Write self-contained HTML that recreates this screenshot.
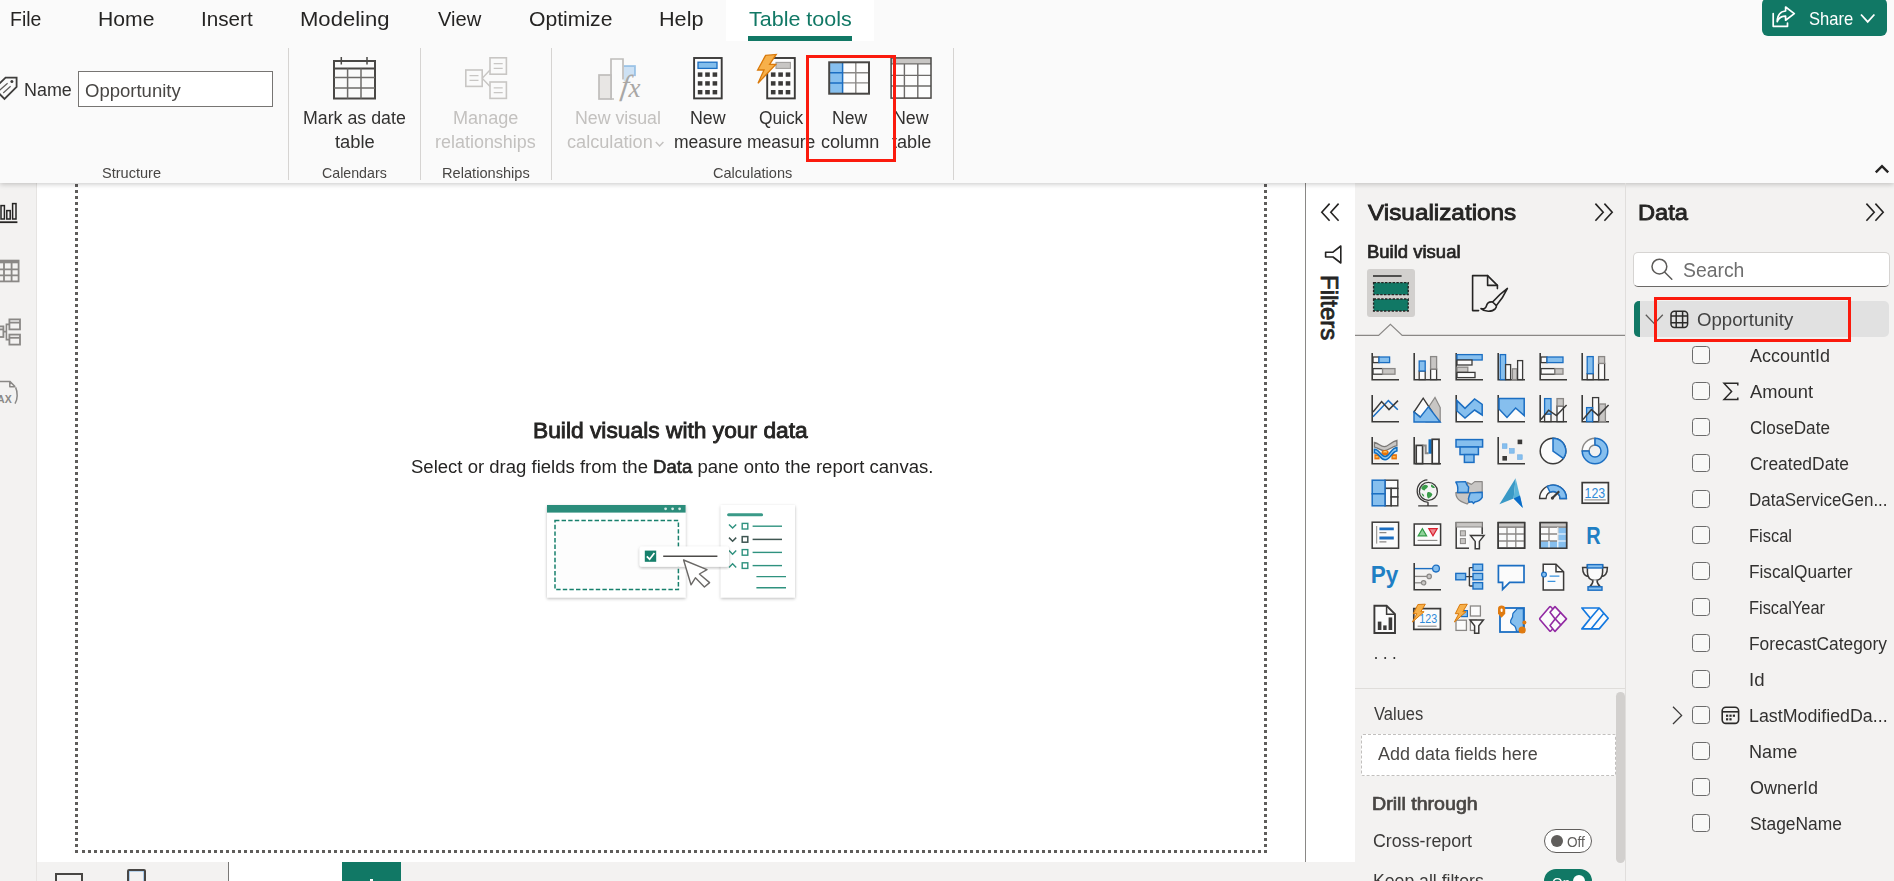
<!DOCTYPE html>
<html lang="en"><head><meta charset="utf-8"><title>Power BI Desktop - Table tools</title>
<style>
html,body{margin:0;padding:0;}
html{overflow:hidden;width:1894px;height:881px;}
body{width:1894px;height:881px;overflow:hidden;position:relative;background:#ffffff;font-family:"Liberation Sans",sans-serif;}
.a{position:absolute;}
.t{position:absolute;white-space:nowrap;line-height:1;transform-origin:0 50%;font-family:"Liberation Sans",sans-serif;}
svg{position:absolute;overflow:visible;}
#ribbon{left:0;top:0;width:1894px;height:183px;background:#fafafa;box-shadow:0 1.5px 5px rgba(0,0,0,.2);}
.sep{position:absolute;top:48px;width:1px;height:132px;background:#d6d4d2;}
#nav{left:0;top:183px;width:36px;height:698px;background:#f3f2f1;border-right:1px solid #e6e4e2;box-sizing:content-box;}
#vizpane{left:1355px;top:183px;width:270px;height:698px;background:#f3f2f1;}
#datapane{left:1626px;top:183px;width:268px;height:698px;background:#f3f2f1;}
#panesep{left:1625px;top:183px;width:1px;height:698px;background:#e0dedc;z-index:1;}
#bottombar{left:37px;top:862px;width:1318px;height:19px;background:#f3f2f1;}
.cb{position:absolute;left:1692px;width:16px;height:16px;border:1px solid #6b6b6b;border-radius:3.5px;background:#f8f8f7;}
.red{position:absolute;border:3px solid #fb1a0d;box-sizing:border-box;z-index:9;}

</style></head>
<body>
<!-- canvas -->
<div class="a" id="canvas" style="left:37px;top:183px;width:1268px;height:679px;background:#fff;"></div>
<div class="a" id="dots" style="left:75px;top:161px;width:1192px;height:692px;box-sizing:border-box;border:3px dotted #5f5d5b;"></div>
<div class="a" style="left:1305px;top:183px;width:1px;height:679px;background:#8a8886;"></div>
<div class="a" id="nav"></div>
<div class="a" id="vizpane"></div>
<div class="a" id="panesep"></div>
<div class="a" id="datapane"></div>
<div class="a" id="bottombar"></div>
<div class="a" id="ribbon"></div>
<!-- ===== ribbon ===== -->
<div class="a" style="left:726px;top:0;width:148px;height:41px;background:#ffffff;"></div>
<div class="a" style="left:748px;top:36px;width:104px;height:5px;background:#117865;"></div>
<!-- share button -->
<div class="a" style="left:1762px;top:-2px;width:125px;height:38px;background:#117865;border-radius:6px;"></div>
<svg style="left:1771px;top:5px" width="26" height="24" viewBox="0 0 26 24" fill="none" stroke="#fff" stroke-width="1.7" stroke-linejoin="round" stroke-linecap="round">
 <path d="M2.2 8.5 V21.3 H16.5 V18"/>
 <path d="M14.6 2 L23.3 8.6 L14.6 15.2 V11.2 C10.2 11.2 7.6 13.2 6.2 16.6 C6.4 10.4 9.6 6.4 14.6 6 Z"/>
</svg>
<svg style="left:1860px;top:13px" width="16" height="11" viewBox="0 0 16 11" fill="none" stroke="#fff" stroke-width="1.8"><path d="M1 1.5 L7.7 8.8 L14.4 1.5"/></svg>
<!-- collapse caret -->
<svg style="left:1874px;top:164px" width="16" height="10" viewBox="0 0 16 10" fill="none" stroke="#252423" stroke-width="2.4"><path d="M1.8 8.4 L8 2.2 L14.2 8.4"/></svg>
<!-- separators -->
<div class="sep" style="left:288px"></div>
<div class="sep" style="left:420px"></div>
<div class="sep" style="left:551px"></div>
<div class="sep" style="left:953px"></div>
<!-- tag icon -->
<svg style="left:0;top:70px" width="24" height="34" viewBox="0 70 24 34" fill="none" stroke="#3f3e3c" stroke-width="1.8" stroke-linejoin="miter">
 <path d="M5.6 77.6 H16.6 V86.8 L4.5 99 L-5.6 88.6 Z"/>
 <path d="M7.6 83.2 L-0.4 90.2 M10.6 86.2 L3.2 93" stroke="#605e5c" stroke-width="1.2"/>
 <circle cx="11.9" cy="81.4" r="1.5" fill="#3f3e3c" stroke="none"/>
</svg>
<!-- name input -->
<div class="a" style="left:78px;top:71px;width:195px;height:36px;box-sizing:border-box;border:1px solid #777573;background:#fff;"></div>
<!-- mark as date table icon -->
<svg style="left:332px;top:56px" width="45" height="44" viewBox="0 0 45 44" fill="none" stroke="#4a4846" stroke-width="1.6">
 <rect x="2" y="5" width="41" height="37.5" stroke-width="2"/>
 <path d="M9.3 1 V8.6 M35 1 V8.6" stroke-width="1.5"/>
 <path d="M2 12.6 H43" stroke-width="2"/>
 <path d="M2 21.6 H43 M2 32 H43 M15.6 12.6 V42.5 M29 12.6 V42.5" stroke="#6e6c6a" stroke-width="1.5"/>
</svg>
<!-- manage relationships icon (disabled) -->
<svg style="left:464px;top:56px" width="45" height="44" viewBox="0 0 45 44" fill="none" stroke="#c8c6c4" stroke-width="1.6">
 <rect x="1.8" y="14" width="16.4" height="16.4"/>
 <rect x="26" y="1.8" width="16.4" height="16.4"/>
 <rect x="26" y="26" width="16.4" height="16.4"/>
 <path d="M5.5 19.6 H14.5 M5.5 24.4 H14.5 M29.7 7.6 H38.7 M29.7 12.4 H38.7 M29.7 31.8 H38.7 M29.7 36.6 H38.7" stroke-width="1.3"/>
 <path d="M18.2 22.2 L26 14 M18.2 22.2 L26 30.4" stroke-width="1.4"/>
</svg>
<!-- new visual calculation icon (disabled) -->
<svg style="left:590px;top:50px" width="60" height="60" viewBox="590 50 60 60" fill="none">
 <rect x="623.8" y="65.2" width="11.9" height="16" fill="#cde1f4"/>
 <path d="M623.8 66.1 H634.9 V80" stroke="#9cc3e6" stroke-width="1.8"/>
 <ellipse cx="634.6" cy="85.6" rx="10.6" ry="9.6" fill="#fafafa"/>
 <rect x="611" y="59" width="12" height="40.6" fill="#fbfbfb"/>
 <path d="M614 99 H611 V59 H623 V79.6" stroke="#bfbdbb" stroke-width="1.7"/>
 <rect x="599" y="75" width="12" height="24" fill="#e8e6e4" stroke="#bfbdbb" stroke-width="1.7"/>
</svg>
<span class="a" style="left:620.6px;top:70.6px;font:italic 29px/1 'Liberation Serif',serif;color:#a9a7a5;transform:skewX(-8deg);">f</span>
<span class="a" style="left:628.4px;top:74.9px;font:italic 27px/1 'Liberation Serif',serif;color:#a9a7a5;">x</span>
<svg style="left:655px;top:141px" width="10" height="7" viewBox="0 0 10 7" fill="none" stroke="#c3c1bf" stroke-width="1.4"><path d="M0.8 0.9 L4.6 4.9 L8.4 0.9"/></svg>
<!-- new measure icon -->
<svg style="left:692px;top:56px" width="32" height="44" viewBox="0 0 32 44" fill="none">
 <rect x="2.1" y="2" width="27.6" height="40.4" stroke="#3b3a39" stroke-width="1.9" fill="#fdfdfd"/>
 <rect x="6" y="6.2" width="19" height="6.2" fill="#83beec" stroke="#1b6ec2" stroke-width="1.3"/>
 <g fill="#3b3a39">
  <rect x="5.8" y="16.4" width="4.6" height="4.4"/><rect x="13.2" y="16.4" width="4.6" height="4.4"/><rect x="20.6" y="16.4" width="4.6" height="4.4"/>
  <rect x="5.8" y="25.2" width="4.6" height="4.4"/><rect x="13.2" y="25.2" width="4.6" height="4.4"/><rect x="20.6" y="25.2" width="4.6" height="4.4"/>
  <rect x="5.8" y="34" width="4.6" height="4.4"/><rect x="13.2" y="34" width="4.6" height="4.4"/><rect x="20.6" y="34" width="4.6" height="4.4"/>
 </g>
</svg>
<!-- quick measure icon -->
<svg style="left:756px;top:53px" width="42" height="48" viewBox="0 0 42 48" fill="none">
 <rect x="11.2" y="5" width="27.6" height="40.4" stroke="#3b3a39" stroke-width="1.9" fill="#fdfdfd"/>
 <rect x="20" y="9.4" width="14.4" height="6" fill="#c8c6c4" stroke="#a19f9d" stroke-width="1.1"/>
 <g fill="#3b3a39">
  <rect x="14.9" y="19.4" width="4.6" height="4.4"/><rect x="22.3" y="19.4" width="4.6" height="4.4"/><rect x="29.7" y="19.4" width="4.6" height="4.4"/>
  <rect x="14.9" y="28.2" width="4.6" height="4.4"/><rect x="22.3" y="28.2" width="4.6" height="4.4"/><rect x="29.7" y="28.2" width="4.6" height="4.4"/>
  <rect x="14.9" y="37" width="4.6" height="4.4"/><rect x="22.3" y="37" width="4.6" height="4.4"/><rect x="29.7" y="37" width="4.6" height="4.4"/>
 </g>
 <path d="M9.6 2.4 L20.2 1.4 L13.6 11.4 L19.8 11.4 L2 30.2 L8 17 L1.6 17 Z" fill="#f7b04a" stroke="#d9790a" stroke-width="1.3" stroke-linejoin="miter"/>
</svg>
<!-- new column icon -->
<svg style="left:827px;top:60px" width="45" height="36" viewBox="0 0 45 36" fill="none">
 <rect x="2.2" y="2.3" width="39.8" height="31.4" fill="#fdfdfd"/>
 <rect x="2.2" y="2.3" width="13.4" height="31.4" fill="#86bfee"/>
 <path d="M15.6 12.7 H42 M15.6 22.9 H42 M28.8 2.3 V33.7" stroke="#8a8886" stroke-width="1.4"/>
 <path d="M2.2 12.7 H15.6 M2.2 22.9 H15.6 M15.6 2.3 V33.7" stroke="#1b6ec2" stroke-width="1.5"/>
 <rect x="2.2" y="2.3" width="39.8" height="31.4" stroke="#484644" stroke-width="2"/>
</svg>
<!-- new table icon -->
<svg style="left:889px;top:56px" width="45" height="44" viewBox="0 0 45 44" fill="none">
 <rect x="2.1" y="1.9" width="39.9" height="40.2" fill="#fdfdfd"/>
 <rect x="2.1" y="1.9" width="39.9" height="6" fill="#c8c6c4"/>
 <path d="M2.1 7.9 H42 M2.1 19.4 H42 M2.1 30 H42 M15.4 7.9 V42.1 M28.8 7.9 V42.1" stroke="#6e6c6a" stroke-width="1.4"/>
 <rect x="2.1" y="1.9" width="39.9" height="40.2" stroke="#4a4846" stroke-width="1.5"/>
</svg>
<!-- red highlight -->
<div class="red" style="left:806px;top:55px;width:90px;height:107px;"></div>

<!-- ===== left nav icons ===== -->
<svg style="left:-6px;top:202px" width="24" height="22" viewBox="0 0 24 22" fill="none" stroke="#252423" stroke-width="1.5">
 <rect x="1.2" y="6.8" width="3.4" height="10.2"/><rect x="7" y="3.6" width="3.4" height="13.4"/><rect x="12.8" y="8.6" width="3.4" height="8.4"/><rect x="18.6" y="1.6" width="3.4" height="15.4"/>
 <path d="M0 20.2 H23.4" stroke-width="1.8"/>
</svg>
<svg style="left:-8px;top:259px" width="28" height="24" viewBox="0 0 28 24" fill="none" stroke="#8a8886" stroke-width="1.8">
 <rect x="1" y="1.6" width="25.6" height="20.8"/>
 <path d="M1 3 H26.6" stroke-width="2.6"/>
 <path d="M1 10.4 H26.6 M1 16.4 H26.6 M12 4 V22.4 M19.6 4 V22.4"/>
</svg>
<svg style="left:-8px;top:317px" width="30" height="30" viewBox="0 0 30 30" fill="none" stroke="#8a8886" stroke-width="1.8">
 <rect x="-2" y="9.4" width="13.4" height="10.6"/><path d="M-2 12.4 H11.4"/>
 <rect x="17.4" y="2.4" width="10.6" height="10"/><path d="M17.4 5.6 H28"/>
 <rect x="17.4" y="17.6" width="10.6" height="10"/><path d="M17.4 20.8 H28"/>
 <path d="M11.4 14.6 H14.4 V7.4 H17.4 M14.4 14.6 V22.6 H17.4" stroke-width="1.6"/>
</svg>
<svg style="left:0;top:378px" width="22" height="28" viewBox="0 378 22 28" fill="none" stroke="#8a8886" stroke-width="1.5" stroke-linejoin="round">
 <path d="M-2 381.4 H9.8 L15.2 386.8 M9.8 381.4 V386.8 H15.2"/>
 <path d="M15.6 387.4 C17.8 392 17.8 399.4 15 403.6" stroke-width="1.5"/>
</svg>
<span class="a" style="left:-10.6px;top:394.2px;font:700 10.5px/1 'Liberation Sans',sans-serif;color:#8a8886;letter-spacing:.1px;">DAX</span>
<!-- ===== bottom bar ===== -->
<div class="a" style="left:228px;top:862px;width:1px;height:19px;background:#7a7876;"></div>
<div class="a" style="left:229px;top:862px;width:113px;height:19px;background:#ffffff;"></div>
<div class="a" style="left:342px;top:862px;width:59px;height:19px;background:#117865;"></div>
<div class="a" style="left:370px;top:879px;width:3px;height:4px;background:#fff;"></div>
<div class="a" style="left:55px;top:873px;width:24px;height:12px;border:2px solid #484644;"></div>
<div class="a" style="left:127px;top:869px;width:14.5px;height:14px;border:2px solid #484644;border-radius:2px;box-shadow:inset 0 0 0 .6px #7fb4e6;"></div>
<!-- ===== canvas illustration ===== -->
<svg style="left:536px;top:496px" width="272" height="116" viewBox="536 496 272 116" fill="none">
 <defs>
  <filter id="sh" x="-10%" y="-10%" width="120%" height="125%"><feDropShadow dx="0" dy="1.2" stdDeviation="1.6" flood-color="#000" flood-opacity=".28"/></filter>
 </defs>
 <!-- left card -->
 <rect x="547" y="505" width="138.6" height="92.5" fill="#fff" filter="url(#sh)"/>
 <rect x="547" y="505" width="138.6" height="7.6" fill="#2b8d7b"/>
 <circle cx="665.6" cy="508.8" r="1.4" fill="#d9ece8"/><circle cx="672.6" cy="508.8" r="1.4" fill="#d9ece8"/><circle cx="679.6" cy="508.8" r="1.4" fill="#d9ece8"/>
 <rect x="555" y="520.6" width="123.4" height="69" stroke="#17806c" stroke-width="1.5" stroke-dasharray="4.4 2.2" fill="#fdfdfd"/>
 <!-- right card -->
 <rect x="720.8" y="505" width="74.2" height="92.5" fill="#fff" filter="url(#sh)"/>
 <path d="M728.6 514.8 H761.6" stroke="#3a9a88" stroke-width="3" stroke-linecap="round"/>
 <g stroke="#2f927f" stroke-width="1.4">
  <path d="M729 524.4 L732.6 528 L736.2 524.4"/><rect x="742.2" y="523.4" width="5.6" height="5.6"/><path d="M752.6 526.2 H782"/>
  <path d="M729 550.6 L732.6 554.2 L736.2 550.6"/><rect x="742.2" y="549.6" width="5.6" height="5.6"/><path d="M752.6 552.4 H782"/>
  <path d="M729 567.4 L732.6 563.8 L736.2 567.4"/><rect x="742.2" y="562.8" width="5.6" height="5.6"/><path d="M752.6 565.6 H782"/>
  <path d="M756.4 576.6 H786 M756.4 587.8 H786"/>
 </g>
 <g stroke="#3f5652" stroke-width="1.5">
  <path d="M729 537.6 L732.6 541.2 L736.2 537.6"/><rect x="742.2" y="536.6" width="5.6" height="5.6"/><path d="M752.6 539.4 H782"/>
 </g>
 <!-- floating chip -->
 <rect x="639.6" y="546.4" width="89.4" height="20.4" rx="2.4" fill="#fff" filter="url(#sh)"/>
 <rect x="644.8" y="550.6" width="11.4" height="11.2" fill="#17806c"/>
 <path d="M646.8 556.4 L649.6 559.2 L654.4 553" stroke="#fff" stroke-width="1.7"/>
 <path d="M663.2 556.2 H717.4" stroke="#4d4b49" stroke-width="1.5"/>
 <!-- cursor -->
 <path d="M683.6 560 L707 569.6 L699.4 574 L709.6 582.6 L704.4 587 L695.4 577.8 L691 584.8 Z" fill="#fff" stroke="#6b6967" stroke-width="1.4" stroke-linejoin="round"/>
</svg>

<!-- ===== filters collapsed pane ===== -->
<svg style="left:1320px;top:202px" width="20" height="20" viewBox="0 0 20 20" fill="none" stroke="#252423" stroke-width="1.6"><path d="M9.6 1.6 L1.8 10.2 L9.6 18.8 M18.6 1.6 L10.8 10.2 L18.6 18.8"/></svg>
<svg style="left:1323px;top:243px" width="20" height="22" viewBox="0 0 20 22" fill="none" stroke="#252423" stroke-width="1.6" stroke-linejoin="round"><path d="M17.8 3 V20 L10 14 H2.6 V9.2 H10 Z"/></svg>
<span class="a" style="left:1341.2px;top:274.8px;transform-origin:0 0;transform:rotate(90deg);white-space:nowrap;font:400 24px/1 'Liberation Sans',sans-serif;color:#252423;-webkit-text-stroke:.8px #252423;">Filters</span>
<!-- ===== visualizations pane ===== -->
<svg style="left:1594px;top:202px" width="20" height="20" viewBox="0 0 20 20" fill="none" stroke="#252423" stroke-width="1.6"><path d="M1.4 1.6 L9.2 10.2 L1.4 18.8 M10.4 1.6 L18.2 10.2 L10.4 18.8"/></svg>
<div class="a" style="left:1367px;top:269px;width:48px;height:48px;background:#d2d0ce;border-radius:3px;"></div>
<svg style="left:1367px;top:269px" width="48" height="48" viewBox="0 0 48 48" fill="none">
 <path d="M6 7 H34.6" stroke="#252423" stroke-width="1.5"/>
 <rect x="6.6" y="13.6" width="34.6" height="12" fill="#117865" stroke="#252423" stroke-width="1.4" stroke-dasharray="2.4 1.4"/>
 <rect x="6.6" y="30" width="34.6" height="12" fill="#117865" stroke="#252423" stroke-width="1.4" stroke-dasharray="2.4 1.4"/>
</svg>
<svg style="left:1470px;top:273px" width="40" height="40" viewBox="0 0 40 40" fill="none" stroke="#252423" stroke-width="1.6" stroke-linejoin="round" stroke-linecap="round">
 <path d="M8.6 37.6 H2.6 V2.6 H17.6 L27.4 12.4 V15.6"/>
 <path d="M17.6 2.6 V12.4 H27.4"/>
 <path d="M37.4 15.4 C32 19.4 26.6 24.4 22.6 29 L26.4 32.6 C30.6 27.6 34.6 21.6 37.4 15.4 Z"/>
 <path d="M22.6 29 C19.4 28.6 17 30.4 16.4 33 C15.8 35.4 13.6 36.4 11 35.6 C14.6 39 22 39.4 25.4 35.6 C26.4 34.4 26.6 33.6 26.4 32.6"/>
</svg>
<!-- tab separator with caret -->
<svg style="left:1355px;top:322px" width="271" height="16" viewBox="0 0 271 16" fill="none"><path d="M0 13.4 H23.6 L35.4 2.4 L47.2 13.4 H271" stroke="#8a8886" stroke-width="1.2"/></svg>
<svg style="left:1371px;top:353px" width="28" height="28" viewBox="0 0 28 28" fill="none"><path d="M1.2 0 V26.8 H28" stroke="#3b3a39" stroke-width="1.6" fill="none"/><rect x="2" y="4" width="6" height="5.6" fill="#fbfbfb" stroke="#3b3a39" stroke-width="1.3"/><rect x="8" y="4" width="10.6" height="5.6" fill="#86bfee" stroke="#1b6ec2" stroke-width="1.3"/><rect x="2" y="15.6" width="9.6" height="5.6" fill="#fbfbfb" stroke="#3b3a39" stroke-width="1.3"/><rect x="11.6" y="15.6" width="12.4" height="5.6" fill="#c8c6c4" stroke="#8a8886" stroke-width="1.3"/></svg>
<svg style="left:1413px;top:353px" width="28" height="28" viewBox="0 0 28 28" fill="none"><path d="M1.2 0 V26.8 H28" stroke="#3b3a39" stroke-width="1.6" fill="none"/><rect x="6.2" y="18" width="6" height="8.6" fill="#fbfbfb" stroke="#3b3a39" stroke-width="1.3"/><rect x="6.2" y="8" width="6" height="10" fill="#86bfee" stroke="#1b6ec2" stroke-width="1.3"/><rect x="17.6" y="16" width="6" height="10.6" fill="#fbfbfb" stroke="#3b3a39" stroke-width="1.3"/><rect x="17.6" y="3.6" width="6" height="12.4" fill="#c8c6c4" stroke="#8a8886" stroke-width="1.3"/></svg>
<svg style="left:1455px;top:353px" width="28" height="28" viewBox="0 0 28 28" fill="none"><path d="M1.2 0 V26.8 H28" stroke="#3b3a39" stroke-width="1.6" fill="none"/><rect x="2" y="1.6" width="25.2" height="5.4" fill="#86bfee" stroke="#1b6ec2" stroke-width="1.3"/><rect x="2" y="7" width="15" height="5" fill="#fbfbfb" stroke="#3b3a39" stroke-width="1.3"/><rect x="2" y="14.2" width="10.8" height="5" fill="#c8c6c4" stroke="#8a8886" stroke-width="1.3"/><rect x="2" y="19.4" width="18" height="5.2" fill="#fbfbfb" stroke="#3b3a39" stroke-width="1.3"/></svg>
<svg style="left:1497px;top:353px" width="28" height="28" viewBox="0 0 28 28" fill="none"><path d="M1.2 0 V26.8 H28" stroke="#3b3a39" stroke-width="1.6" fill="none"/><rect x="3.2" y="1.6" width="5.4" height="25" fill="#86bfee" stroke="#1b6ec2" stroke-width="1.3"/><rect x="8.6" y="11.6" width="5" height="15" fill="#fbfbfb" stroke="#3b3a39" stroke-width="1.3"/><rect x="15.4" y="15.8" width="4.6" height="10.8" fill="#c8c6c4" stroke="#8a8886" stroke-width="1.3"/><rect x="20.6" y="7.6" width="5" height="19" fill="#fbfbfb" stroke="#3b3a39" stroke-width="1.3"/></svg>
<svg style="left:1539px;top:353px" width="28" height="28" viewBox="0 0 28 28" fill="none"><path d="M1.2 0 V26.8 H28" stroke="#3b3a39" stroke-width="1.6" fill="none"/><rect x="2" y="4" width="6" height="5.6" fill="#fbfbfb" stroke="#3b3a39" stroke-width="1.3"/><rect x="8" y="4" width="16" height="5.6" fill="#86bfee" stroke="#1b6ec2" stroke-width="1.3"/><rect x="2" y="15.6" width="14" height="5.6" fill="#fbfbfb" stroke="#3b3a39" stroke-width="1.3"/><rect x="16" y="15.6" width="8" height="5.6" fill="#c8c6c4" stroke="#8a8886" stroke-width="1.3"/></svg>
<svg style="left:1581px;top:353px" width="28" height="28" viewBox="0 0 28 28" fill="none"><path d="M1.2 0 V26.8 H28" stroke="#3b3a39" stroke-width="1.6" fill="none"/><rect x="6.2" y="20.6" width="6" height="6" fill="#fbfbfb" stroke="#3b3a39" stroke-width="1.3"/><rect x="6.2" y="3.6" width="6" height="17" fill="#86bfee" stroke="#1b6ec2" stroke-width="1.3"/><rect x="17.6" y="10.4" width="6" height="16.2" fill="#fbfbfb" stroke="#3b3a39" stroke-width="1.3"/><rect x="17.6" y="3.6" width="6" height="6.8" fill="#c8c6c4" stroke="#8a8886" stroke-width="1.3"/></svg>
<svg style="left:1371px;top:395px" width="28" height="28" viewBox="0 0 28 28" fill="none"><path d="M1.2 0 V26.8 H28" stroke="#3b3a39" stroke-width="1.6" fill="none"/><path d="M2 21.8 L17.4 5.6 L26.8 14.8" stroke="#1b6ec2" stroke-width="1.5" fill="none"/><path d="M2 17 L10.6 6.6 L18 14.6 L27 5.6" stroke="#3b3a39" stroke-width="1.5" fill="none"/></svg>
<svg style="left:1413px;top:395px" width="28" height="28" viewBox="0 0 28 28" fill="none"><path d="M13 16 L22 2.4 L27.2 12.6 V27 H13 Z" fill="#c8c6c4" stroke="#8a8886" stroke-width="1.2"/><path d="M1 17 L10.2 3.2 L19.4 17 L10 24 Z" fill="#fbfbfb" stroke="#3b3a39" stroke-width="1.4" stroke-linejoin="miter"/><path d="M1 17 L7.2 22.2 L15.4 11.8 L27.2 27 H1 Z" fill="#86bfee" stroke="#1b6ec2" stroke-width="1.4" stroke-linejoin="miter"/></svg>
<svg style="left:1455px;top:395px" width="28" height="28" viewBox="0 0 28 28" fill="none"><path d="M1.2 0 V26.8 H28" stroke="#3b3a39" stroke-width="1.6" fill="none"/><path d="M2 19 L10 25 L19.6 15 L27.2 20 V26 H2 Z" fill="#fbfbfb"/><path d="M2 5.6 L10 13.4 L19.6 4 L27.2 9.4 V20 L19.6 15 L10 23 L2 16 Z" fill="#86bfee" stroke="#1b6ec2" stroke-width="1.5" stroke-linejoin="miter"/></svg>
<svg style="left:1497px;top:395px" width="28" height="28" viewBox="0 0 28 28" fill="none"><path d="M1.2 0 V26.8 H28" stroke="#3b3a39" stroke-width="1.6" fill="none"/><path d="M2 14 L10 22.4 L18.6 13 L27.2 20.6 V26 H2 Z" fill="#fbfbfb"/><path d="M2 3.4 H27.2 V20.6 L18.6 13 L10 22.4 L2 14 Z" fill="#86bfee" stroke="#1b6ec2" stroke-width="1.5" stroke-linejoin="miter"/></svg>
<svg style="left:1539px;top:395px" width="28" height="28" viewBox="0 0 28 28" fill="none"><path d="M1.2 0 V26.8 H28" stroke="#3b3a39" stroke-width="1.6" fill="none"/><rect x="5.6" y="19" width="6.4" height="7.6" fill="#fbfbfb" stroke="#3b3a39" stroke-width="1.3"/><rect x="5.6" y="3.6" width="6.4" height="15.4" fill="#86bfee" stroke="#1b6ec2" stroke-width="1.3"/><rect x="18" y="11" width="6.4" height="15.6" fill="#fbfbfb" stroke="#3b3a39" stroke-width="1.3"/><rect x="18" y="3.6" width="6.4" height="7.4" fill="#c8c6c4" stroke="#8a8886" stroke-width="1.3"/><path d="M2 24.4 L9.6 15.2 L17.4 20.6 L27.6 10" stroke="#3b3a39" stroke-width="1.5" fill="none"/></svg>
<svg style="left:1581px;top:395px" width="28" height="28" viewBox="0 0 28 28" fill="none"><path d="M1.2 0 V26.8 H28" stroke="#3b3a39" stroke-width="1.6" fill="none"/><rect x="11.6" y="2.6" width="6" height="24" fill="#fbfbfb" stroke="#3b3a39" stroke-width="1.3"/><rect x="5.6" y="12.6" width="6" height="14" fill="#86bfee" stroke="#1b6ec2" stroke-width="1.3"/><rect x="18.4" y="9" width="6" height="17.6" fill="#c8c6c4" stroke="#8a8886" stroke-width="1.3"/><path d="M2 24.4 L10.4 14.6 L17.4 20.6 L27.6 10" stroke="#3b3a39" stroke-width="1.5" fill="none"/></svg>
<svg style="left:1371px;top:437px" width="28" height="28" viewBox="0 0 28 28" fill="none"><path d="M1.2 0 V26.8 H28" stroke="#3b3a39" stroke-width="1.6" fill="none"/><path d="M3.4 5.5 C8 6.5 9.5 9.6 13.2 9.6 C17.5 9.6 20 4.6 25.9 3.4 V8.6 C20 9.8 17.5 13.6 13.2 13.6 C9.5 13.6 8 11 3.4 10.2 Z" fill="#c8c6c4" stroke="#7a7876" stroke-width="1.3"/><rect x="3.4" y="17.2" width="5.2" height="5.2" fill="#e8730a"/><rect x="20.4" y="17.2" width="5.5" height="5.2" fill="#e8730a"/><ellipse cx="14.1" cy="15.8" rx="3.6" ry="2.8" fill="#e8730a"/><path d="M4.6 19.9 H7.4 M21.8 19.9 H24.6 M12.4 15.2 C13.4 14.5 14.8 14.5 15.8 15.2" stroke="#ffd36b" stroke-width="1.1" fill="none"/><path d="M3.4 12.3 C8.5 12.3 9.5 19.4 14.1 19.4 C19 19.4 19.5 11.2 25.9 10.5 V13.9 C20.5 14.5 19.6 22.8 14.1 22.8 C9 22.8 8.5 15.7 3.4 15.7 Z" fill="#8cc8f5" stroke="#0f6cbd" stroke-width="1.5"/></svg>
<svg style="left:1413px;top:437px" width="28" height="28" viewBox="0 0 28 28" fill="none"><path d="M1.2 0 V26.8 H28" stroke="#3b3a39" stroke-width="1.6" fill="none"/><rect x="3.2" y="8.4" width="6.4" height="18.2" fill="#fbfbfb" stroke="#3b3a39" stroke-width="1.7"/><path d="M9.6 8.6 H12.7 V16.2 H15.6" stroke="#8a8886" stroke-width="2" fill="none"/><rect x="15.5" y="2.3" width="3.3" height="14.4" fill="#0f6cbd"/><rect x="19.2" y="2.3" width="6.8" height="24.3" fill="#fbfbfb" stroke="#3b3a39" stroke-width="1.7"/></svg>
<svg style="left:1455px;top:437px" width="28" height="28" viewBox="0 0 28 28" fill="none"><rect x="1" y="2.6" width="26.6" height="7.4" fill="#86bfee" stroke="#1b6ec2" stroke-width="1.5"/><rect x="5" y="10" width="18.4" height="7.6" fill="#86bfee" stroke="#1b6ec2" stroke-width="1.5"/><rect x="9.4" y="17.6" width="9.6" height="7.8" fill="#86bfee" stroke="#1b6ec2" stroke-width="1.5"/></svg>
<svg style="left:1497px;top:437px" width="28" height="28" viewBox="0 0 28 28" fill="none"><path d="M1.2 0 V26.8 H28" stroke="#3b3a39" stroke-width="1.6" fill="none"/><rect x="20.6" y="2.6" width="4.6" height="4.6" fill="#3b3a39"/><rect x="5.4" y="19" width="4.6" height="4.6" fill="#3b3a39"/><rect x="5.4" y="6.8" width="4.6" height="4.6" fill="#86bfee" stroke="#6aaae4" stroke-width=".6"/><rect x="12.6" y="11.6" width="4.6" height="4.6" fill="#86bfee" stroke="#6aaae4" stroke-width=".6"/><rect x="20.6" y="17.8" width="4.6" height="4.6" fill="#86bfee" stroke="#6aaae4" stroke-width=".6"/></svg>
<svg style="left:1539px;top:437px" width="28" height="28" viewBox="0 0 28 28" fill="none"><circle cx="14" cy="14" r="12.8" fill="#fbfbfb" stroke="#3b3a39" stroke-width="1.5"/><path d="M14 1.2 A12.8 12.8 0 0 1 24.4 21.4 L14 14 Z" fill="#86bfee" stroke="#1b6ec2" stroke-width="1.5" stroke-linejoin="miter"/></svg>
<svg style="left:1581px;top:437px" width="28" height="28" viewBox="0 0 28 28" fill="none"><path d="M14 1.2 A12.8 12.8 0 0 0 1.2 14 H8 A6 6 0 0 1 14 8 Z" fill="#fbfbfb" stroke="#8a8886" stroke-width="1.4"/><path d="M14 1.2 A12.8 12.8 0 1 1 1.2 14 H8 A6 6 0 1 0 14 8 Z" fill="#86bfee" stroke="#1b6ec2" stroke-width="1.5" stroke-linejoin="miter"/></svg>
<svg style="left:1371px;top:479px" width="28" height="28" viewBox="0 0 28 28" fill="none"><rect x="14" y="1.2" width="12.8" height="8.2" fill="#fbfbfb" stroke="#3b3a39" stroke-width="1.4"/><rect x="14" y="9.4" width="6.2" height="17.4" fill="#fbfbfb" stroke="#3b3a39" stroke-width="1.4"/><rect x="20.2" y="9.4" width="6.6" height="8.6" fill="#fbfbfb" stroke="#3b3a39" stroke-width="1.4"/><rect x="20.2" y="18" width="6.6" height="8.8" fill="#fbfbfb" stroke="#3b3a39" stroke-width="1.4"/><rect x="1.2" y="1.2" width="12.8" height="13.6" fill="#86bfee" stroke="#1b6ec2" stroke-width="1.5"/><rect x="1.2" y="14.8" width="12.8" height="12" fill="#86bfee" stroke="#1b6ec2" stroke-width="1.5"/></svg>
<svg style="left:1413px;top:479px" width="28" height="28" viewBox="0 0 28 28" fill="none"><circle cx="15.4" cy="12.4" r="9" fill="#f4f4f4" stroke="#3b3a39" stroke-width="1.3"/><path d="M10.2 6.4 C12 5 14.6 5.6 15 7.6 C14.6 9.4 12.4 9.6 11.6 11.4 C10.4 11.4 8.6 10.6 8.2 9 C8.6 8 9.2 7 10.2 6.4 Z M14.4 13.4 C16 12.4 18.6 13.4 19.4 15.4 C18.8 17.4 17 18.6 15.2 19.4 C14 18 13.4 15.2 14.4 13.4 Z M18 5.6 C19.6 6 21.4 7.4 22 9 C20.6 9.4 19 8.6 18 7.4 Z M8.6 14.2 C10 14.6 11.4 16 11.2 17.8 C9.8 17.2 8.8 15.8 8.6 14.2 Z" fill="#3a9c4a"/><path d="M14.4 0.8 C7.8 1.2 3.8 6.6 4.2 12.8 C4.6 19 9.4 23 15.4 23.4" stroke="#3b3a39" stroke-width="1.3" fill="none"/><path d="M15 23.4 V26.8 M5.2 26.9 H24.6" stroke="#3b3a39" stroke-width="1.4"/></svg>
<svg style="left:1455px;top:479px" width="28" height="28" viewBox="0 0 28 28" fill="none"><path d="M13.6 8 C12.6 6.6 12 5 12 3.4 L16.4 5.4 L19.8 2.6 H27.2 V13.2 L15.2 13.8 L13.2 13.4 Z" fill="#c8c6c4" stroke="#8a8886" stroke-width="1.2" stroke-linejoin="round"/><path d="M0.8 13.6 L15 13.8 L13.4 19.6 L13.8 23.2 L12.2 25 L8.8 23.6 C5.6 22.6 2.4 20.4 1.2 16.8 Z" fill="#c8c6c4" stroke="#8a8886" stroke-width="1.2" stroke-linejoin="round"/><path d="M0.8 3 L10.6 2.6 C11.2 5 11.8 6.6 13.6 8 L13.2 13.5 L2.4 13.5 C3.2 10 3.4 7 0.8 3 Z" fill="#86bfee" stroke="#1b6ec2" stroke-width="1.4" stroke-linejoin="round"/><path d="M15.2 13.9 L27.2 13.2 V18.4 C25.6 21.4 22.6 22.6 19.8 23 L18.4 24.4 L17.2 22.8 L14 23.2 L13.5 19.6 Z" fill="#86bfee" stroke="#1b6ec2" stroke-width="1.4" stroke-linejoin="round"/></svg>
<svg style="left:1497px;top:479px" width="28" height="28" viewBox="0 0 28 28" fill="none"><path d="M18.6 -0.8 L2.4 25.2 L16.6 19.4 Z" fill="#3999c6"/><path d="M18.6 -0.8 L16.6 19.4 L25.8 29 Z" fill="#59b4d9"/><path d="M16.6 19.4 L23 16.6 L25.8 29 Z" fill="#0a6cc9"/></svg>
<svg style="left:1539px;top:479px" width="28" height="28" viewBox="0 0 28 28" fill="none"><g transform="translate(0,-1.5)"><path d="M0.6 21 A13.4 13.4 0 0 1 27.4 21 H21 A7 7 0 0 0 7 21 Z" fill="#fbfbfb" stroke="#3b3a39" stroke-width="1.4"/><path d="M8.2 8.9 A13.4 13.4 0 0 1 27.4 21 H21 A7 7 0 0 0 11 14.7 Z" fill="#86bfee" stroke="#1b6ec2" stroke-width="1.4" stroke-linejoin="miter"/><path d="M13.2 20.8 L20.2 13.8" stroke="#3b3a39" stroke-width="2.2"/><circle cx="13.4" cy="20.6" r="1.6" fill="#3b3a39"/></g></svg>
<svg style="left:1581px;top:479px" width="28" height="28" viewBox="0 0 28 28" fill="none"><rect x="1.2" y="3.6" width="26.2" height="20.6" fill="#fbfbfb" stroke="#3b3a39" stroke-width="1.7"/><text x="13.9" y="18.5" text-anchor="middle" font-family="Liberation Sans, sans-serif" font-size="14.4" fill="#2e8ad8" textLength="20.6" lengthAdjust="spacingAndGlyphs">123</text><path d="M3.4 20.9 H24.8" stroke="#8a8886" stroke-width="1.1"/></svg>
<svg style="left:1371px;top:521px" width="28" height="28" viewBox="0 0 28 28" fill="none"><rect x="1.2" y="1.2" width="26.4" height="26" fill="#fbfbfb" stroke="#3b3a39" stroke-width="1.5"/><path d="M8.4 7.8 H22.8 M8.4 17 H22.8" stroke="#1b6ec2" stroke-width="2.8"/><path d="M8.4 11.6 H15.4 M8.4 20.8 H15.4" stroke="#8a8886" stroke-width="1.3"/><path d="M5.7 5 V22.6" stroke="#8a8886" stroke-width="1"/></svg>
<svg style="left:1413px;top:521px" width="28" height="28" viewBox="0 0 28 28" fill="none"><rect x="1.2" y="3" width="26.4" height="21.2" fill="#fbfbfb" stroke="#3b3a39" stroke-width="1.5"/><path d="M5.2 14.8 L9.4 7.6 L13.6 14.8 Z" fill="#8fd19a" stroke="#2f9a44" stroke-width="1.2"/><path d="M15.8 7.6 L24.2 7.6 L20 14.8 Z" fill="#f08a92" stroke="#d8202f" stroke-width="1.2"/><path d="M4.6 19.4 H24.4" stroke="#8a8886" stroke-width="1.1"/></svg>
<svg style="left:1455px;top:521px" width="28" height="28" viewBox="0 0 28 28" fill="none"><rect x="1.2" y="1.6" width="26" height="25.6" fill="#fbfbfb" stroke="#3b3a39" stroke-width="1.5"/><rect x="1.2" y="1.6" width="26" height="4.4" fill="#c8c6c4" stroke="#8a8886" stroke-width="1"/><rect x="5.4" y="9.8" width="5" height="5" fill="#c8c6c4" stroke="#8a8886" stroke-width="1"/><rect x="5.4" y="17.6" width="5" height="5" fill="#c8c6c4" stroke="#8a8886" stroke-width="1"/><rect x="14" y="13" width="15" height="16" fill="#f3f2f1"/><path d="M15.6 14.6 h13.4 l-4.6 5.8 v7.4 h-4.2 v-7.4 z" fill="#fbfbfb" stroke="#3b3a39" stroke-width="1.5" stroke-linejoin="miter"/></svg>
<svg style="left:1497px;top:521px" width="28" height="28" viewBox="0 0 28 28" fill="none"><rect x="1.2" y="1.6" width="26.4" height="25.6" fill="#fbfbfb" stroke="#3b3a39" stroke-width="1.5"/><rect x="1.2" y="1.6" width="26.4" height="4.6" fill="#c8c6c4" stroke="#8a8886" stroke-width="1"/><path d="M1.2 6.2 H27.6 M1.2 13 H27.6 M1.2 20 H27.6 M10 6.2 V27.2 M18.8 6.2 V27.2" stroke="#8a8886" stroke-width="1.3"/><rect x="1.2" y="1.6" width="26.4" height="25.6" fill="none" stroke="#3b3a39" stroke-width="1.5"/></svg>
<svg style="left:1539px;top:521px" width="28" height="28" viewBox="0 0 28 28" fill="none"><rect x="1.2" y="1.6" width="26.4" height="25.6" fill="#fbfbfb" stroke="#3b3a39" stroke-width="1.5"/><rect x="18.8" y="6.2" width="8.8" height="21" fill="#86bfee"/><rect x="1.2" y="20" width="26.4" height="7.2" fill="#86bfee"/><rect x="1.2" y="1.6" width="26.4" height="4.6" fill="#c8c6c4" stroke="#8a8886" stroke-width="1"/><path d="M1.2 6.2 H27.6 M1.2 13 H18.8 M1.2 20 H18.8 M10 6.2 V20 M18.8 6.2 V20" stroke="#8a8886" stroke-width="1.3"/><path d="M18.8 13 H27.6 M18.8 20 H27.6 M10 20 V27.2 M18.8 20 V27.2 M18.8 6.2 V20" stroke="#fff" stroke-width="1.2"/><rect x="1.2" y="1.6" width="26.4" height="25.6" fill="none" stroke="#3b3a39" stroke-width="1.5"/></svg>
<svg style="left:1581px;top:521px" width="28" height="28" viewBox="0 0 28 28" fill="none"><text x="12.4" y="22.6" text-anchor="middle" font-family="Liberation Sans, sans-serif" font-weight="700" font-size="23.6" fill="#1f7fc4" textLength="14.4" lengthAdjust="spacingAndGlyphs">R</text></svg>
<svg style="left:1371px;top:563px" width="28" height="28" viewBox="0 0 28 28" fill="none"><text x="13.6" y="19.8" text-anchor="middle" font-family="Liberation Sans, sans-serif" font-weight="700" font-size="24" fill="#1f7fc4" textLength="27.6" lengthAdjust="spacingAndGlyphs">Py</text></svg>
<svg style="left:1413px;top:563px" width="28" height="28" viewBox="0 0 28 28" fill="none"><path d="M1.2 0 V26.8 H28" stroke="#3b3a39" stroke-width="1.6" fill="none"/><path d="M2 5.6 H20" stroke="#1b6ec2" stroke-width="1.4"/><circle cx="23" cy="5.6" r="3.4" fill="#86bfee" stroke="#1b6ec2" stroke-width="1.3"/><path d="M2 13.4 H14" stroke="#8a8886" stroke-width="1.3"/><circle cx="16.2" cy="13.4" r="2.2" fill="#c8c6c4" stroke="#8a8886" stroke-width="1.2"/><path d="M2 19.8 H8.6" stroke="#8a8886" stroke-width="1.3"/><circle cx="10.6" cy="19.8" r="2.2" fill="#c8c6c4" stroke="#8a8886" stroke-width="1.2"/></svg>
<svg style="left:1455px;top:563px" width="28" height="28" viewBox="0 0 28 28" fill="none"><path d="M10.4 13.6 H18 M14.4 4.6 V23 M14.4 4.6 H18 M14.4 23 H18" stroke="#3b3a39" stroke-width="1.4" fill="none"/><rect x="0.8" y="10.4" width="9.8" height="6.4" fill="#86bfee" stroke="#1b6ec2" stroke-width="1.4"/><rect x="18" y="1.2" width="9.6" height="6.4" fill="#86bfee" stroke="#1b6ec2" stroke-width="1.4"/><rect x="18" y="10.4" width="9.6" height="6.4" fill="#86bfee" stroke="#1b6ec2" stroke-width="1.4"/><rect x="18" y="19.6" width="9.6" height="6.4" fill="#86bfee" stroke="#1b6ec2" stroke-width="1.4"/></svg>
<svg style="left:1497px;top:563px" width="28" height="28" viewBox="0 0 28 28" fill="none"><path d="M1.4 2.6 H27 V19.4 H12.6 L5.6 26.4 V19.4 H1.4 Z" fill="#fbfbfb" stroke="#1b6ec2" stroke-width="1.7" stroke-linejoin="miter"/></svg>
<svg style="left:1539px;top:563px" width="28" height="28" viewBox="0 0 28 28" fill="none"><path d="M4.2 1.2 H17 L24.6 8.8 V27 H4.2 Z" fill="#fbfbfb" stroke="#3b3a39" stroke-width="1.5" stroke-linejoin="miter"/><path d="M17 1.2 V8.8 H24.6" fill="none" stroke="#3b3a39" stroke-width="1.5"/><circle cx="5" cy="11.6" r="2.4" fill="#86bfee" stroke="#1b6ec2" stroke-width="1.2"/><path d="M10.6 13.2 H20.4 M8.6 18.4 H16.4" stroke="#3a93de" stroke-width="1.2"/></svg>
<svg style="left:1581px;top:563px" width="28" height="28" viewBox="0 0 28 28" fill="none"><path d="M6.4 4.6 H1.6 C1.6 11 4.4 13.6 8.4 13.6 M21.6 4.6 H26.4 C26.4 11 23.6 13.6 19.6 13.6" fill="none" stroke="#3b3a39" stroke-width="1.5"/><path d="M6.4 2 H21.6 V9 C21.6 14.6 18.4 17.4 14 17.4 C9.6 17.4 6.4 14.6 6.4 9 Z" fill="#fbfbfb" stroke="#3b3a39" stroke-width="1.5"/><path d="M12 17.2 C12 20.4 10.6 22 8.8 23.6 H19.2 C17.4 22 16 20.4 16 17.2" fill="#fbfbfb" stroke="#3b3a39" stroke-width="1.5"/><rect x="6.4" y="1.6" width="15.2" height="3.4" fill="#86bfee" stroke="#1b6ec2" stroke-width="1.4"/><rect x="7" y="23.8" width="14" height="3.4" fill="#86bfee" stroke="#1b6ec2" stroke-width="1.4"/></svg>
<svg style="left:1371px;top:605px" width="28" height="28" viewBox="0 0 28 28" fill="none"><path d="M3.4 0.8 H15.6 L24 9.2 V28 H3.4 Z" fill="#fbfbfb" stroke="#3b3a39" stroke-width="1.9" stroke-linejoin="miter"/><path d="M15.6 0.8 V9.2 H24" fill="none" stroke="#3b3a39" stroke-width="1.5"/><rect x="6.8" y="16.6" width="3.6" height="8.4" fill="#3b3a39"/><rect x="12.2" y="20.4" width="3.4" height="4.6" fill="#3b3a39"/><rect x="17.6" y="12.4" width="3.6" height="12.6" fill="#3b3a39"/></svg>
<svg style="left:1413px;top:605px" width="28" height="28" viewBox="0 0 28 28" fill="none"><rect x="0.8" y="3.6" width="26.6" height="20.8" fill="#fbfbfb" stroke="#3b3a39" stroke-width="1.7"/><text x="15.2" y="18.4" text-anchor="middle" font-family="Liberation Sans, sans-serif" font-size="13.4" fill="#2e8ad8" textLength="17.8" lengthAdjust="spacingAndGlyphs">123</text><path d="M4.6 21.2 H23.6" stroke="#8a8886" stroke-width="1.1"/><path d="M4.9 -0.5 l7.4 -0.3 l-4.5 7.5 h3.3 l-11.7 10.3 l4.4 -8.3 h-3.5 z" fill="#f7b04a" stroke="#d9790a" stroke-width="1" stroke-linejoin="miter"/></svg>
<svg style="left:1455px;top:605px" width="28" height="28" viewBox="0 0 28 28" fill="none"><rect x="15.4" y="1" width="10" height="10" fill="#fbfbfb" stroke="#8a8886" stroke-width="1.3"/><rect x="1" y="15.2" width="10.4" height="10.2" fill="#fbfbfb" stroke="#8a8886" stroke-width="1.3"/><rect x="15.4" y="15.2" width="6" height="10.2" fill="#fbfbfb" stroke="#8a8886" stroke-width="1.3"/><rect x="6.4" y="5.6" width="6" height="6" fill="#86bfee" stroke="#1b6ec2" stroke-width="1.2"/><path d="M15 15 h13.4 l-4.6 5.8 v7.4 h-4.2 v-7.4 z" fill="#fbfbfb" stroke="#3b3a39" stroke-width="1.5" stroke-linejoin="miter"/><path d="M4.9 -0.5 l7.4 -0.3 l-4.5 7.5 h3.3 l-11.7 10.3 l4.4 -8.3 h-3.5 z" fill="#f7b04a" stroke="#d9790a" stroke-width="1" stroke-linejoin="miter"/></svg>
<svg style="left:1497px;top:605px" width="28" height="28" viewBox="0 0 28 28" fill="none"><rect x="3" y="3" width="24" height="24" fill="#fbfbfb" stroke="#1b6ec2" stroke-width="1.8"/><path d="M20 3.6 C19 6.6 14.6 7 15.6 10.6 C16.4 13.4 12.6 14 13.6 17.4 C14.4 20 18 19.6 18.6 22.6 L19.6 26.4 H26.4 V3.6 Z" fill="#86bfee" stroke="#1b6ec2" stroke-width="1.3"/><path d="M1 3.6 C1 1.4 2.6 0.4 4.6 0.4 C6.6 0.4 8.2 1.4 8.2 3.6 V8.8 L4.6 12.8 L1 8.8 Z" fill="#e07b10"/><rect x="3.6" y="3.4" width="2" height="3.6" rx="1" fill="#fff"/><circle cx="25.2" cy="25" r="3.6" fill="#e07b10"/><circle cx="27.4" cy="17.6" r="2" fill="#e07b10"/></svg>
<svg style="left:1539px;top:605px" width="28" height="28" viewBox="0 0 28 28" fill="none"><path d="M13.6 3.8 L11.7 1.8 Q11.2 1.3 10.7 1.8 L0.9 13.3 Q0.5 13.9 0.9 14.5 L10.7 26 Q11.2 26.5 11.7 26 L13.6 24" fill="#fbfbfb" stroke="#922aa3" stroke-width="1.6" stroke-linecap="round"/><path d="M16 1.6 L27.5 13.9 L16 26.4 L11 20.5 L16.2 13.9 L11 7.3 Z" fill="#fbfbfb" stroke="#922aa3" stroke-width="1.6" stroke-linejoin="round"/><path d="M16.2 13.9 L21.7 19.8 M21.5 7.7 L16.2 13.9" stroke="#922aa3" stroke-width="1.6" stroke-linecap="round"/></svg>
<svg style="left:1581px;top:605px" width="28" height="28" viewBox="0 0 28 28" fill="none"><path d="M0.9 3 H18.2 L27.2 13.3 L18.2 23.9 H0.9 L9.4 13.3 Z" fill="#fbfbfb" stroke="#1278e0" stroke-width="1.7" stroke-linejoin="round"/><path d="M18.2 3 L9.4 13.3 M22.6 8.4 L10 23.9" stroke="#1278e0" stroke-width="1.6" fill="none"/></svg>
<div class="a" style="left:1374.7px;top:656.7px;width:2.6px;height:2.6px;background:#252423;border-radius:1px;box-shadow:9.2px 0 #252423,18.3px 0 #252423;"></div>
<!-- wells -->
<div class="a" style="left:1355px;top:688px;width:270px;height:1px;background:#dfddda;"></div>
<div class="a" style="left:1616.3px;top:692px;width:8.7px;height:171px;background:#d2d0ce;border-radius:4.4px;"></div>
<div class="a" style="left:1361px;top:734px;width:255px;height:41.5px;box-sizing:border-box;background:#fff;border:1px dashed #c2c0be;border-radius:2px;"></div>
<!-- toggles -->
<div class="a" style="left:1544px;top:829px;width:48px;height:24px;box-sizing:border-box;background:#fff;border:1px solid #605e5c;border-radius:12px;"></div>
<div class="a" style="left:1551px;top:835px;width:12px;height:12px;border-radius:6px;background:#605e5c;"></div>
<div class="a" style="left:1544px;top:869px;width:48px;height:24px;background:#117865;border-radius:12px;"></div>
<div class="a" style="left:1573px;top:875px;width:12px;height:12px;border-radius:6px;background:#fff;"></div>

<!-- ===== data pane ===== -->
<svg style="left:1865px;top:202px" width="20" height="20" viewBox="0 0 20 20" fill="none" stroke="#252423" stroke-width="1.6"><path d="M1.4 1.6 L9.2 10.2 L1.4 18.8 M10.4 1.6 L18.2 10.2 L10.4 18.8"/></svg>
<div class="a" style="left:1632.5px;top:251.5px;width:257.5px;height:35.5px;box-sizing:border-box;background:#fff;border:1px solid #d6d4d2;border-bottom:1.3px solid #6b6967;border-radius:5px;"></div>
<svg style="left:1650px;top:257px" width="24" height="24" viewBox="0 0 24 24" fill="none" stroke="#5c5a58" stroke-width="1.5" stroke-linecap="round"><circle cx="9.4" cy="9.6" r="7.4"/><path d="M14.8 15.2 L21.8 22.2"/></svg>
<!-- selected table row -->
<div class="a" style="left:1634px;top:301px;width:255px;height:36px;background:#e1e1e1;border-radius:5px;"></div>
<div class="a" style="left:1634px;top:301px;width:6.4px;height:36px;background:#117865;border-radius:5px 0 0 5px;"></div>
<svg style="left:1645px;top:313.6px" width="19" height="11" viewBox="0 0 19 11" fill="none" stroke="#5c5a58" stroke-width="1.3"><path d="M0.8 0.8 L9.3 9.6 L17.8 0.8"/></svg>
<svg style="left:1670px;top:310px" width="19" height="19" viewBox="0 0 19 19" fill="none" stroke="#2b2a29" stroke-width="1.5"><rect x="1" y="1.2" width="16.6" height="16.2" rx="3.4"/><path d="M1 6 H17.6 M1 12.8 H17.6 M6.2 1.2 V17.4 M12.6 1.2 V17.4"/></svg>
<div class="red" style="left:1654px;top:297px;width:197px;height:45px;"></div>
<!-- sigma -->
<svg style="left:1722px;top:381.5px" width="18" height="19" viewBox="0 0 18 19" fill="none" stroke="#2b2a29" stroke-width="1.5" stroke-linejoin="miter"><path d="M15.8 3.4 V1.2 H2 L9.6 9.4 L2 17.6 H15.8 V15.4"/></svg>
<!-- calendar + chevron on LastModifiedDate -->
<svg style="left:1671.6px;top:706px" width="11" height="19" viewBox="0 0 11 19" fill="none" stroke="#3b3a39" stroke-width="1.3"><path d="M1 0.8 L9.6 9.4 L1 18"/></svg>
<svg style="left:1721.4px;top:706px" width="19" height="19" viewBox="0 0 19 19" fill="none" stroke="#2b2a29" stroke-width="1.6"><rect x="1.2" y="1.2" width="16.4" height="16.2" rx="3.6"/><path d="M1.2 5.8 H17.6"/><g fill="#2b2a29" stroke="none"><rect x="5" y="8.6" width="2.2" height="2.2"/><rect x="8.4" y="8.6" width="2.2" height="2.2"/><rect x="11.8" y="8.6" width="2.2" height="2.2"/><rect x="5" y="12.2" width="2.2" height="2.2"/><rect x="8.4" y="12.2" width="2.2" height="2.2"/></g></svg>
<!-- field checkboxes -->
<div class="cb" style="top:346px"></div>
<div class="cb" style="top:382px"></div>
<div class="cb" style="top:418px"></div>
<div class="cb" style="top:454px"></div>
<div class="cb" style="top:490px"></div>
<div class="cb" style="top:526px"></div>
<div class="cb" style="top:562px"></div>
<div class="cb" style="top:598px"></div>
<div class="cb" style="top:634px"></div>
<div class="cb" style="top:670px"></div>
<div class="cb" style="top:706px"></div>
<div class="cb" style="top:742px"></div>
<div class="cb" style="top:778px"></div>
<div class="cb" style="top:814px"></div>

<span class="t" style="left:10.1px;top:8.9px;font-size:20.5px;color:#252423;transform:scaleX(0.9484);">File</span>
<span class="t" style="left:98.0px;top:8.9px;font-size:20.5px;color:#252423;transform:scaleX(1.0322);">Home</span>
<span class="t" style="left:201.0px;top:8.9px;font-size:20.5px;color:#252423;transform:scaleX(1.0084);">Insert</span>
<span class="t" style="left:299.9px;top:8.9px;font-size:20.5px;color:#252423;transform:scaleX(1.0759);">Modeling</span>
<span class="t" style="left:437.5px;top:8.9px;font-size:20.5px;color:#252423;transform:scaleX(0.9829);">View</span>
<span class="t" style="left:529.0px;top:8.9px;font-size:20.5px;color:#252423;transform:scaleX(1.0313);">Optimize</span>
<span class="t" style="left:658.9px;top:8.9px;font-size:20.5px;color:#252423;transform:scaleX(1.0550);">Help</span>
<span class="t" style="left:748.5px;top:8.9px;font-size:20.5px;color:#117865;transform:scaleX(1.0485);">Table tools</span>
<span class="t" style="left:1808.5px;top:9.9px;font-size:18.5px;color:#ffffff;transform:scaleX(0.8965);">Share</span>
<span class="t" style="left:24.0px;top:82.2px;font-size:17.5px;color:#323130;transform:scaleX(1.0234);">Name</span>
<span class="t" style="left:85.0px;top:82.7px;font-size:17.5px;color:#484644;transform:scaleX(1.0583);">Opportunity</span>
<span class="t" style="left:303.0px;top:109.9px;font-size:17.5px;color:#323130;transform:scaleX(1.0159);">Mark as date</span>
<span class="t" style="left:335.0px;top:133.7px;font-size:17.5px;color:#323130;transform:scaleX(1.0480);">table</span>
<span class="t" style="left:453.0px;top:109.9px;font-size:17.5px;color:#c3c1bf;transform:scaleX(1.0324);">Manage</span>
<span class="t" style="left:435.0px;top:133.7px;font-size:17.5px;color:#c3c1bf;transform:scaleX(1.0256);">relationships</span>
<span class="t" style="left:575.0px;top:109.9px;font-size:17.5px;color:#c3c1bf;transform:scaleX(1.0154);">New visual</span>
<span class="t" style="left:566.5px;top:133.7px;font-size:17.5px;color:#c3c1bf;transform:scaleX(1.0371);">calculation</span>
<span class="t" style="left:690.0px;top:109.9px;font-size:17.5px;color:#323130;transform:scaleX(1.0183);">New</span>
<span class="t" style="left:674.0px;top:133.7px;font-size:17.5px;color:#323130;transform:scaleX(1.0022);">measure</span>
<span class="t" style="left:758.5px;top:109.9px;font-size:17.5px;color:#323130;transform:scaleX(0.9893);">Quick</span>
<span class="t" style="left:746.5px;top:133.7px;font-size:17.5px;color:#323130;transform:scaleX(1.0022);">measure</span>
<span class="t" style="left:831.5px;top:109.9px;font-size:17.5px;color:#323130;transform:scaleX(1.0038);">New</span>
<span class="t" style="left:820.5px;top:133.7px;font-size:17.5px;color:#323130;transform:scaleX(1.0327);">column</span>
<span class="t" style="left:893.0px;top:109.9px;font-size:17.5px;color:#323130;transform:scaleX(1.0183);">New</span>
<span class="t" style="left:892.0px;top:133.7px;font-size:17.5px;color:#323130;transform:scaleX(1.0345);">table</span>
<span class="t" style="left:102.0px;top:166.4px;font-size:14.5px;color:#484644;transform:scaleX(1.0040);">Structure</span>
<span class="t" style="left:322.0px;top:166.4px;font-size:14.5px;color:#484644;transform:scaleX(0.9796);">Calendars</span>
<span class="t" style="left:442.0px;top:166.4px;font-size:14.5px;color:#484644;transform:scaleX(1.0082);">Relationships</span>
<span class="t" style="left:713.0px;top:166.4px;font-size:14.5px;color:#484644;transform:scaleX(1.0034);">Calculations</span>
<span class="t" style="left:532.5px;top:419.6px;font-size:22px;color:#252423;-webkit-text-stroke:0.84px currentColor;transform:scaleX(1.0354);">Build visuals with your data</span>
<span class="t" style="left:410.5px;top:458.6px;font-size:17.5px;color:#252423;transform:scaleX(1.0592);">Select or drag fields from the <span style="-webkit-text-stroke:.55px currentColor">Data</span> pane onto the report canvas.</span>
<span class="t" style="left:1367.5px;top:201.7px;font-size:22.5px;color:#252423;-webkit-text-stroke:0.85px currentColor;transform:scaleX(1.0810);">Visualizations</span>
<span class="t" style="left:1366.5px;top:243.4px;font-size:18px;color:#252423;-webkit-text-stroke:0.68px currentColor;transform:scaleX(1.0275);">Build visual</span>
<span class="t" style="left:1373.5px;top:706.2px;font-size:17.5px;color:#3b3a39;transform:scaleX(0.9436);">Values</span>
<span class="t" style="left:1377.5px;top:746.2px;font-size:17.5px;color:#484644;transform:scaleX(1.0263);">Add data fields here</span>
<span class="t" style="left:1372.4px;top:795.2px;font-size:18px;color:#484644;-webkit-text-stroke:0.68px currentColor;transform:scaleX(1.0891);">Drill through</span>
<span class="t" style="left:1372.8px;top:833.2px;font-size:17.5px;color:#3b3a39;transform:scaleX(1.0187);">Cross-report</span>
<span class="t" style="left:1567.0px;top:834.7px;font-size:14px;color:#605e5c;transform:scaleX(0.9716);">Off</span>
<span class="t" style="left:1372.5px;top:873.2px;font-size:17.5px;color:#3b3a39;transform:scaleX(1.0077);">Keep all filters</span>
<span class="t" style="left:1551.5px;top:876.1px;font-size:14px;color:#ffffff;transform:scaleX(0.9782);">On</span>
<span class="t" style="left:1637.9px;top:201.8px;font-size:22.5px;color:#252423;-webkit-text-stroke:0.85px currentColor;transform:scaleX(1.0529);">Data</span>
<span class="t" style="left:1683.0px;top:261.1px;font-size:19.5px;color:#6e6e6e;transform:scaleX(0.9928);">Search</span>
<span class="t" style="left:1697.0px;top:311.8px;font-size:17.5px;color:#424242;transform:scaleX(1.0638);">Opportunity</span>
<span class="t" style="left:1749.8px;top:348.0px;font-size:17.5px;color:#323130;transform:scaleX(1.0273);">AccountId</span>
<span class="t" style="left:1749.8px;top:384.0px;font-size:17.5px;color:#323130;transform:scaleX(1.0455);">Amount</span>
<span class="t" style="left:1749.8px;top:420.0px;font-size:17.5px;color:#323130;transform:scaleX(0.9781);">CloseDate</span>
<span class="t" style="left:1749.8px;top:456.0px;font-size:17.5px;color:#323130;transform:scaleX(0.9970);">CreatedDate</span>
<span class="t" style="left:1748.8px;top:492.0px;font-size:17.5px;color:#323130;transform:scaleX(0.9687);">DataServiceGen...</span>
<span class="t" style="left:1748.9px;top:528.0px;font-size:17.5px;color:#323130;transform:scaleX(0.9404);">Fiscal</span>
<span class="t" style="left:1748.8px;top:564.0px;font-size:17.5px;color:#323130;transform:scaleX(0.9856);">FiscalQuarter</span>
<span class="t" style="left:1748.9px;top:600.0px;font-size:17.5px;color:#323130;transform:scaleX(0.9373);">FiscalYear</span>
<span class="t" style="left:1748.8px;top:636.0px;font-size:17.5px;color:#323130;transform:scaleX(0.9918);">ForecastCategory</span>
<span class="t" style="left:1748.7px;top:672.0px;font-size:17.5px;color:#323130;transform:scaleX(1.0651);">Id</span>
<span class="t" style="left:1748.8px;top:708.0px;font-size:17.5px;color:#323130;transform:scaleX(1.0177);">LastModifiedDa...</span>
<span class="t" style="left:1748.8px;top:744.0px;font-size:17.5px;color:#323130;transform:scaleX(1.0345);">Name</span>
<span class="t" style="left:1749.8px;top:780.0px;font-size:17.5px;color:#323130;transform:scaleX(1.0274);">OwnerId</span>
<span class="t" style="left:1749.8px;top:816.0px;font-size:17.5px;color:#323130;transform:scaleX(0.9948);">StageName</span>

</body></html>
